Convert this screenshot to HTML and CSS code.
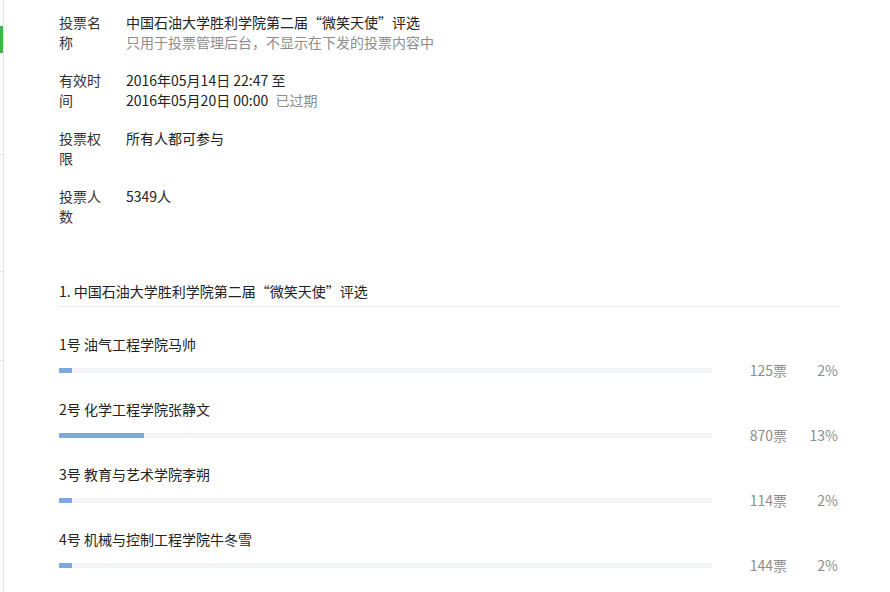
FILE: index.html
```html
<!DOCTYPE html>
<html lang="zh-CN">
<head>
    <meta charset="UTF-8">
    <title>投票详情</title>
    <link rel="stylesheet" href="styles.css">
</head>
<body>
    <div class="page">
        <!-- Sidebar (mostly scrolled out of view) -->
        <aside class="sidebar">
            <div class="menu-group first">
                <div class="menu-item active"></div>
            </div>
            <div class="menu-group second"></div>
            <div class="menu-group third"></div>
            <div class="menu-group rest"></div>
        </aside>

        <main class="content">
            <!-- Vote info -->
            <div class="info">
                <div class="info-row">
                    <div class="info-label">投票名称</div>
                    <div class="info-value">
                        <p>中国石油大学胜利学院第二届“微笑天使”评选</p>
                        <p class="hint">只用于投票管理后台，不显示在下发的投票内容中</p>
                    </div>
                </div>
                <div class="info-row">
                    <div class="info-label">有效时间</div>
                    <div class="info-value">
                        <p>2016年05月14日 22:47 至</p>
                        <p>2016年05月20日 00:00 <span class="status">已过期</span></p>
                    </div>
                </div>
                <div class="info-row">
                    <div class="info-label">投票权限</div>
                    <div class="info-value">
                        <p>所有人都可参与</p>
                    </div>
                </div>
                <div class="info-row">
                    <div class="info-label">投票人数</div>
                    <div class="info-value">
                        <p>5349人</p>
                    </div>
                </div>
            </div>

            <!-- Question results -->
            <section class="question">
                <h3 class="question-title">1. 中国石油大学胜利学院第二届“微笑天使”评选</h3>
                <ul class="options">
                    <li class="option">
                        <div class="option-name">1号 油气工程学院马帅</div>
                        <div class="option-result">
                            <div class="track"><div class="fill" style="width: 2%"></div></div>
                            <span class="count">125票</span>
                            <span class="percent">2%</span>
                        </div>
                    </li>
                    <li class="option">
                        <div class="option-name">2号 化学工程学院张静文</div>
                        <div class="option-result">
                            <div class="track"><div class="fill" style="width: 13%"></div></div>
                            <span class="count">870票</span>
                            <span class="percent">13%</span>
                        </div>
                    </li>
                    <li class="option">
                        <div class="option-name">3号 教育与艺术学院李朔</div>
                        <div class="option-result">
                            <div class="track"><div class="fill" style="width: 2%"></div></div>
                            <span class="count">114票</span>
                            <span class="percent">2%</span>
                        </div>
                    </li>
                    <li class="option">
                        <div class="option-name">4号 机械与控制工程学院牛冬雪</div>
                        <div class="option-result">
                            <div class="track"><div class="fill" style="width: 2%"></div></div>
                            <span class="count">144票</span>
                            <span class="percent">2%</span>
                        </div>
                    </li>
                </ul>
            </section>
        </main>
    </div>
</body>
</html>
```

FILE: styles.css
```css
html, body {
    margin: 0;
    padding: 0;
    height: 100%;
}

body {
    font-family: "Noto Sans CJK SC", "Noto Sans", sans-serif;
    font-size: 14px;
    line-height: 20px;
    color: #222;
    background-color: #fff;
}

p, h3, ul {
    margin: 0;
    padding: 0;
}

.page {
    display: flex;
    min-height: 100%;
}

/* Sidebar */
.sidebar {
    width: 3px;
    flex-shrink: 0;
    display: flex;
    flex-direction: column;
    background-color: #fdfdfd;
    border-right: 1px solid #e4e4e4;
}
.menu-group.first {
    height: 154px;
    padding-top: 26px;
    box-sizing: border-box;
}
.menu-group.second {
    height: 116px;
    border-top: 1px solid #e4e4e4;
}
.menu-group.third {
    height: 88px;
    border-top: 1px solid #e4e4e4;
}
.menu-group.rest {
    flex: 1;
    border-top: 1px solid #e4e4e4;
}
.menu-item.active {
    height: 27px;
    background-color: #44b549;
}

/* Main content */
.content {
    flex: 1;
    padding: 12px 52px 0 55px;
}

/* Info rows */
.info-row {
    display: flex;
    margin-bottom: 18px;
}
.info-label {
    width: 48px;
    margin-right: 19px;
    min-height: 40px;
    color: #333;
}
.info-value {
    flex: 1;
}
.hint {
    color: #8d8d8d;
}
.status {
    color: #8d8d8d;
    margin-left: 4px;
}

/* Question */
.question {
    margin-top: 55px;
}
.question-title {
    font-size: 14px;
    font-weight: normal;
    color: #222;
    padding-bottom: 5px;
    border-bottom: 1px solid #e7e7eb;
}
.options {
    list-style: none;
    padding-top: 27px;
}
.option {
    margin-bottom: 19px;
}
.option-name {
    color: #222;
}
.option-result {
    display: flex;
    align-items: center;
    margin-top: 6px;
    height: 20px;
}
.track {
    flex: 1;
    height: 5px;
    background-color: #f2f3f7;
}
.fill {
    height: 100%;
    background-color: #7ea8dd;
}
.count,
.percent {
    color: #8d8d8d;
    text-align: right;
}
.count {
    width: 75px;
}
.percent {
    width: 51px;
}
```
